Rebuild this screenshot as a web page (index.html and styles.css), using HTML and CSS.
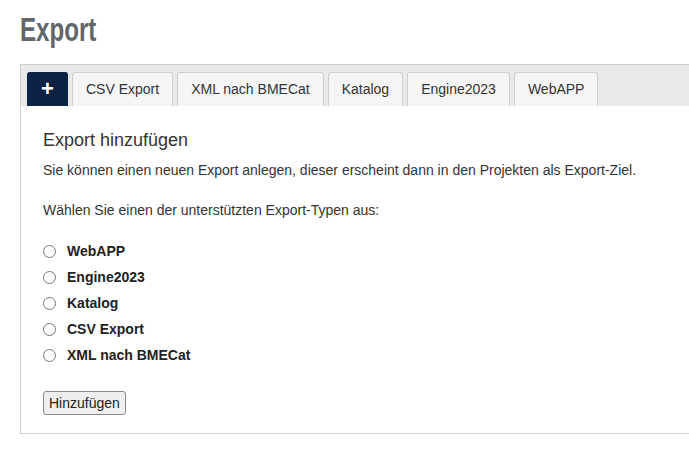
FILE: index.html
```html
<!DOCTYPE html>
<html lang="de">

<head>
    <meta charset="UTF-8">
    <meta name="viewport" content="width=device-width, initial-scale=1.0">
    <title>Export</title>
    <link rel="stylesheet" href="styles.css">
</head>

<body>
    <h1 class="page-title"><span>Export</span></h1>

    <div class="panel">
        <ul class="tabs">
            <li class="tab tab-add">+</li>
            <li class="tab">CSV Export</li>
            <li class="tab">XML nach BMECat</li>
            <li class="tab">Katalog</li>
            <li class="tab">Engine2023</li>
            <li class="tab">WebAPP</li>
        </ul>

        <div class="panel-body">
            <h2>Export hinzufügen</h2>
            <p>Sie können einen neuen Export anlegen, dieser erscheint dann in den Projekten als Export-Ziel.</p>
            <p>Wählen Sie einen der unterstützten Export-Typen aus:</p>

            <div class="type-list">
                <label class="type-item"><input type="radio" name="type"> WebAPP</label>
                <label class="type-item"><input type="radio" name="type"> Engine2023</label>
                <label class="type-item"><input type="radio" name="type"> Katalog</label>
                <label class="type-item"><input type="radio" name="type"> CSV Export</label>
                <label class="type-item"><input type="radio" name="type"> XML nach BMECat</label>
            </div>

            <button class="btn-add">Hinzufügen</button>
        </div>
    </div>
</body>

</html>
```

FILE: styles.css
```css
html {
    overflow: hidden;
}

body {
    margin: 0;
    padding: 0 0 0 20px;
    font-family: "Liberation Sans", Arial, sans-serif;
    font-size: 14px;
    color: #333;
}

.page-title {
    margin: 0;
    padding-top: 10px;
    height: 64px;
    box-sizing: border-box;
    font-family: "Liberation Sans", Arial, sans-serif;
    font-size: 33px;
    line-height: 40px;
    font-weight: bold;
    color: #62666b;
}

/* condensed headline look */
.page-title span {
    display: inline-block;
    transform: scaleX(0.73);
    transform-origin: left center;
}

.panel {
    width: 700px;
    border: 1px solid #cfcfcf;
}

/* tab strip */
.tabs {
    display: flex;
    gap: 4px;
    margin: 0;
    padding: 7px 0 0 6px;
    list-style: none;
    background: #e9e9e9;
}

.tab {
    height: 34px;
    box-sizing: border-box;
    padding: 0 13px;
    line-height: 32px;
    background: #f5f5f5;
    border: 1px solid #cfcfcf;
    border-bottom: none;
    border-radius: 3px 3px 0 0;
    color: #333;
}

.tab-add {
    width: 41px;
    padding: 0;
    text-align: center;
    background: #0b2244;
    border-color: #0b2244;
    color: #fff;
    font-size: 22px;
    font-weight: bold;
}

.panel-body {
    padding: 22px 22px 18px;
}

.panel-body h2 {
    margin: 0 0 8px;
    font-size: 18px;
    font-weight: normal;
    line-height: 24px;
    color: #333;
}

.panel-body p {
    margin: 0 0 20px;
    line-height: 20px;
}

.type-list {
    display: flex;
    flex-direction: column;
    margin: -2px 0 23px;
}

.type-item {
    display: flex;
    align-items: center;
    height: 26px;
    font-weight: bold;
    color: #222;
}

.type-item input {
    width: 13px;
    height: 13px;
    margin: 0 11px 0 0;
}

.btn-add {
    height: 24px;
    padding: 0 5px;
    font-family: "Liberation Sans", Arial, sans-serif;
    font-size: 14px;
    color: #222;
    background: #efefef;
    border: 1px solid #8a8a8a;
    border-radius: 3px;
}
```
